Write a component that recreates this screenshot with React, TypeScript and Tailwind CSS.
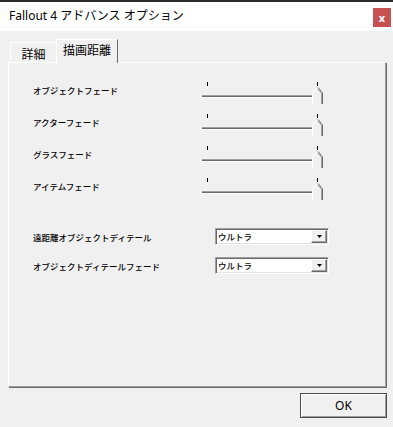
import React from 'react'

const jp = { fontFamily: '"Noto Sans CJK JP", "Noto Sans", sans-serif' }
const ui = { fontFamily: '"Noto Sans", "Noto Sans CJK JP", sans-serif' }

const SLIDERS = ['オブジェクトフェード', 'アクターフェード', 'グラスフェード', 'アイテムフェード']
const COMBOS = ['遠距離オブジェクトディテール', 'オブジェクトディテールフェード']

function Slider() {
  return (
    <svg width="124" height="24" viewBox="0 0 124 24" className="block">
      <line x1="7.5" y1="1" x2="7.5" y2="5" stroke="#000" />
      <line x1="117.5" y1="1" x2="117.5" y2="5" stroke="#000" />
      <rect x="2" y="14" width="110" height="1" fill="#a0a0a0" />
      <rect x="2" y="15" width="110" height="1" fill="#696969" />
      <rect x="2" y="16" width="110" height="1" fill="#ffffff" />
      <polygon points="112,12 118,6 123,12 123,23 112,23" fill="#f0f0f0" />
      <polyline points="112.5,23 112.5,12 118,6.5" fill="none" stroke="#ffffff" />
      <polyline points="118,6.5 122.5,12 122.5,23" fill="none" stroke="#696969" />
      <polyline points="118,8 121.5,12.5 121.5,23" fill="none" stroke="#a0a0a0" />
    </svg>
  )
}

function Combo() {
  return (
    <div className="flex h-[17px] w-[114px] items-center justify-between border border-t-[#a0a0a0] border-l-[#a0a0a0] border-r-white border-b-white bg-white shadow-[inset_1px_1px_0_#696969,inset_-1px_-1px_0_#e3e3e3]">
      <span className="pl-[2px] text-[8.5px] font-medium leading-none text-black" style={jp}>
        ウルトラ
      </span>
      <div className="mr-[1px] flex h-[13px] w-[16px] items-center justify-center border border-t-white border-l-white border-r-[#696969] border-b-[#696969] bg-[#f0f0f0] shadow-[inset_-1px_-1px_0_#a0a0a0]">
        <svg width="5" height="3" viewBox="0 0 5 3">
          <polygon points="0,0 5,0 2.5,3" fill="#000" />
        </svg>
      </div>
    </div>
  )
}

export default function App() {
  return (
    <div className="flex h-[427px] w-[393px] flex-col overflow-hidden border-t-2 border-[#2b2b2b] bg-[#f0f0f0]">
      <div className="flex h-[29px] shrink-0 items-start justify-between bg-white">
        <span className="pl-[9px] pt-[7px] text-[12px] leading-[14px] text-black" style={ui}>
          Fallout 4 アドバンス オプション
        </span>
        <div className="mr-[2px] mt-[6px] flex h-[19px] w-[18px] items-center justify-center bg-[#c75050] text-[11px] font-bold leading-none text-white" style={ui}>
          x
        </div>
      </div>

      <div className="flex h-[31px] shrink-0 items-end pl-[10px]">
        <div className="flex h-[20px] w-[46px] items-center justify-center border-l border-t border-white pt-[2px] text-[12px] leading-none text-black" style={jp}>
          詳細
        </div>
        <div className="relative z-10 -mb-px flex h-[24px] w-[62px] items-start justify-center border-l border-t border-r border-l-white border-t-white border-r-[#696969] bg-[#f0f0f0] pt-[4px] text-[12px] leading-none text-black" style={jp}>
          描画距離
        </div>
      </div>

      <div className="ml-[8px] h-[325px] w-[378px] border border-l-white border-t-white border-r-[#a0a0a0] border-b-[#a0a0a0] pl-[24px] pt-[18px] shadow-[1px_1px_0_#696969]">
        <div className="flex flex-col">
          {SLIDERS.map(s => (
            <div key={s} className="flex h-[32px] items-start">
              <span className="w-[167px] pt-[4px] text-[8.5px] font-medium leading-[10px] text-black" style={jp}>
                {s}
              </span>
              <Slider />
            </div>
          ))}
        </div>
        <div className="mt-[19px] flex flex-col gap-[12px]">
          {COMBOS.map(c => (
            <div key={c} className="flex items-center">
              <span className="w-[182px] text-[8.5px] font-medium leading-[10px] text-black" style={jp}>
                {c}
              </span>
              <Combo />
            </div>
          ))}
        </div>
      </div>

      <div className="flex justify-end pr-[6px] pt-[6px]">
        <button className="flex h-[25px] w-[87px] items-center justify-center border border-[#4a4a4a] bg-[#f0f0f0] text-[12px] text-black shadow-[inset_1px_1px_0_#ffffff,inset_-1px_-1px_0_#a0a0a0]" style={ui}>
          OK
        </button>
      </div>
    </div>
  )
}
